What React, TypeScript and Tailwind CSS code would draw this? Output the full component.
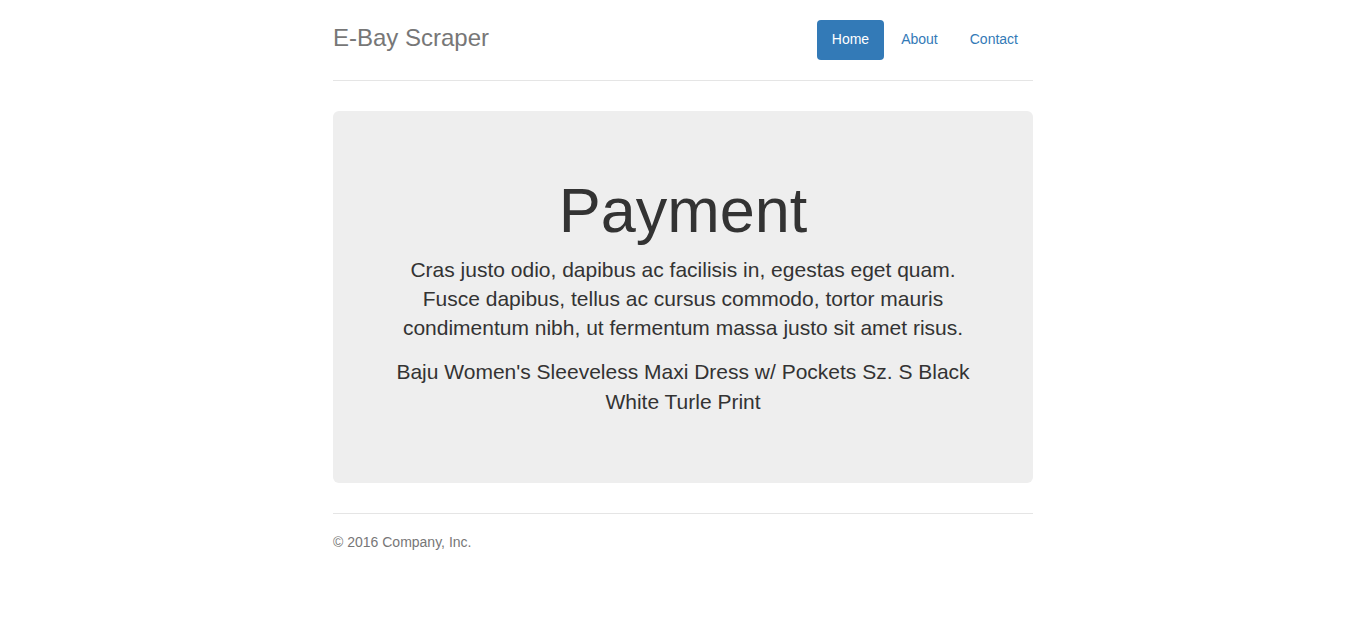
export default function App() {
  const links = ["Home", "About", "Contact"];
  return (
    <div
      className="min-h-screen bg-white pt-5 text-[14px] leading-[20px] text-[#333]"
      style={{ fontFamily: '"Liberation Sans", Arial, sans-serif' }}
    >
      <div className="mx-auto w-[700px]">
        <div className="flex items-start justify-between border-b border-[#e5e5e5] pb-5 mb-[30px]">
          <h3 className="m-0 mb-1 text-[24px] leading-[36px] text-[#777]">E-Bay Scraper</h3>
          <ul className="flex gap-[2px]">
            {links.map((l, i) => (
              <li key={l}>
                <a
                  href="#"
                  className={
                    i === 0
                      ? "block rounded-[4px] bg-[#337ab7] px-[15px] pt-[9px] pb-[11px] text-white"
                      : "block rounded-[4px] px-[15px] pt-[9px] pb-[11px] text-[#337ab7]"
                  }
                >
                  {l}
                </a>
              </li>
            ))}
          </ul>
        </div>

        <div className="mb-[30px] rounded-[6px] bg-[#eee] px-[60px] pt-[48px] pb-[66px] text-center">
          <h1 className="mt-[17px] mb-[10px] text-[63px] leading-[1.1] font-light">Payment</h1>
          <p className="mb-[15px] text-[21px] leading-[29px] font-extralight">
            Cras justo odio, dapibus ac facilisis in, egestas eget quam. Fusce dapibus, tellus ac cursus
            commodo, tortor mauris condimentum nibh, ut fermentum massa justo sit amet risus.
          </p>
          <p className="text-[21px] leading-[30px] font-extralight">
            Baju Women's Sleeveless Maxi Dress w/ Pockets Sz. S Black White Turle Print
          </p>
        </div>

        <footer className="border-t border-[#e5e5e5] pt-[18px] text-[#777]">
          <p className="mb-[10px]">© 2016 Company, Inc.</p>
        </footer>
      </div>
    </div>
  );
}
